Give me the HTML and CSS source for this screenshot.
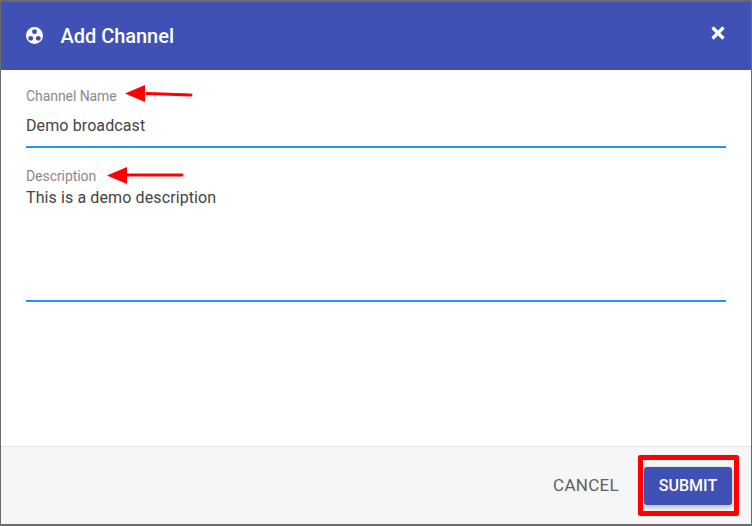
FILE: index.html
```html
<!DOCTYPE html>
<html lang="en">
<head>
<meta charset="utf-8">
<title>Add Channel</title>
<link rel="stylesheet" href="styles.css">
</head>
<body>
<div class="dialog">
  <header class="head">
    <svg class="logo" width="17" height="17" viewBox="0 0 18 18"><circle cx="9" cy="9" r="9" fill="#fff"/><circle cx="9" cy="5" r="2.6" fill="#3f51b5"/><circle cx="5" cy="12" r="2.6" fill="#3f51b5"/><circle cx="13" cy="12" r="2.6" fill="#3f51b5"/></svg>
    <h1 class="title">Add Channel</h1>
    <svg class="close" width="14" height="14" viewBox="0 0 14 14"><path d="M1.500 1.500 12.500 12.500M12.500 1.500 1.500 12.500" stroke="#fff" stroke-width="3.200" fill="none"/></svg>
  </header>
  <main class="body">
    <div class="field name">
      <label class="label">Channel Name</label>
      <div class="value single">Demo broadcast</div>
    </div>
    <div class="field desc">
      <label class="label">Description</label>
      <div class="value multi">This is a demo description</div>
    </div>
  </main>
  <footer class="foot">
    <button class="btn cancel">CANCEL</button>
    <button class="btn submit">SUBMIT</button>
  </footer>
</div>
<svg class="arrow a1" width="68" height="20" viewBox="0 0 68 20"><path d="M66 11 22 9.500" stroke="#f00" stroke-width="3" stroke-linecap="round"/><path d="M0 9.500 20 1V18Z" fill="#f00"/></svg>
<svg class="arrow a2" width="78" height="20" viewBox="0 0 78 20"><path d="M75 9H20" stroke="#f00" stroke-width="3" stroke-linecap="round"/><path d="M0 9.500 20 1V18Z" fill="#f00"/></svg>
<div class="hilite"></div>
</body>
</html>
```
FILE: styles.css
```css
* { box-sizing: border-box; }
html, body { margin: 0; height: 100%; }
body { position: relative; width: 752px; height: 526px; overflow: hidden; background: #6b6b6b; padding: 2px 1px 2px 1px; font-family: Roboto, "Liberation Sans", sans-serif; }
.dialog { height: 522px; background: #fff; display: flex; flex-direction: column; }
.head { height: 68px; flex: none; background: #3f51b5; display: flex; align-items: center; padding: 0 26px 0 25px; color: #fff; }
.logo { flex: none; margin-bottom: 2px; }
.title { margin: 0 0 0 17.500px; font-size: 20px; font-weight: 500; letter-spacing: -.03px; flex: 1; }
.close { flex: none; margin-bottom: 6px; }
.body { flex: 1; padding: 0 25px; color: #424242; }
.field { border-bottom: 2px solid #2196f3; }
.name { height: 78px; padding-top: 17px; }
.desc { height: 135px; margin-top: 19px; }
.label { display: block; font-size: 14px; line-height: 18px; letter-spacing: -.07px; color: #8a8a8a; }
.value { font-size: 16px; line-height: 20px; letter-spacing: .11px; color: #444; }
.single { margin-top: 11px; }
.multi { margin-top: 3px; }
.foot { height: 78px; flex: none; background: #f6f6f6; border-top: 1px solid #e4e4e4; display: flex; justify-content: flex-end; align-items: center; gap: 10px; padding: 0 19px 0 0; }
.btn { border: 0; border-radius: 3px; font-family: inherit; font-size: 16px; height: 38px; background: none; }
.cancel { color: #5f5f5f; padding: 0 15px 2px; font-size: 17px; font-weight: 400; letter-spacing: .3px; }
.submit { width: 88px; background: #3f51b5; color: #fff; padding: 0; font-weight: 500; box-shadow: 0 2px 5px rgba(0,0,0,.3); }
.arrow { position: absolute; }
.a1 { left: 125px; top: 84px; }
.a2 { left: 107px; top: 166px; }
.hilite { position: absolute; left: 638px; top: 455px; width: 101px; height: 61px; border: 5px solid #f00; border-radius: 2px; }
```
